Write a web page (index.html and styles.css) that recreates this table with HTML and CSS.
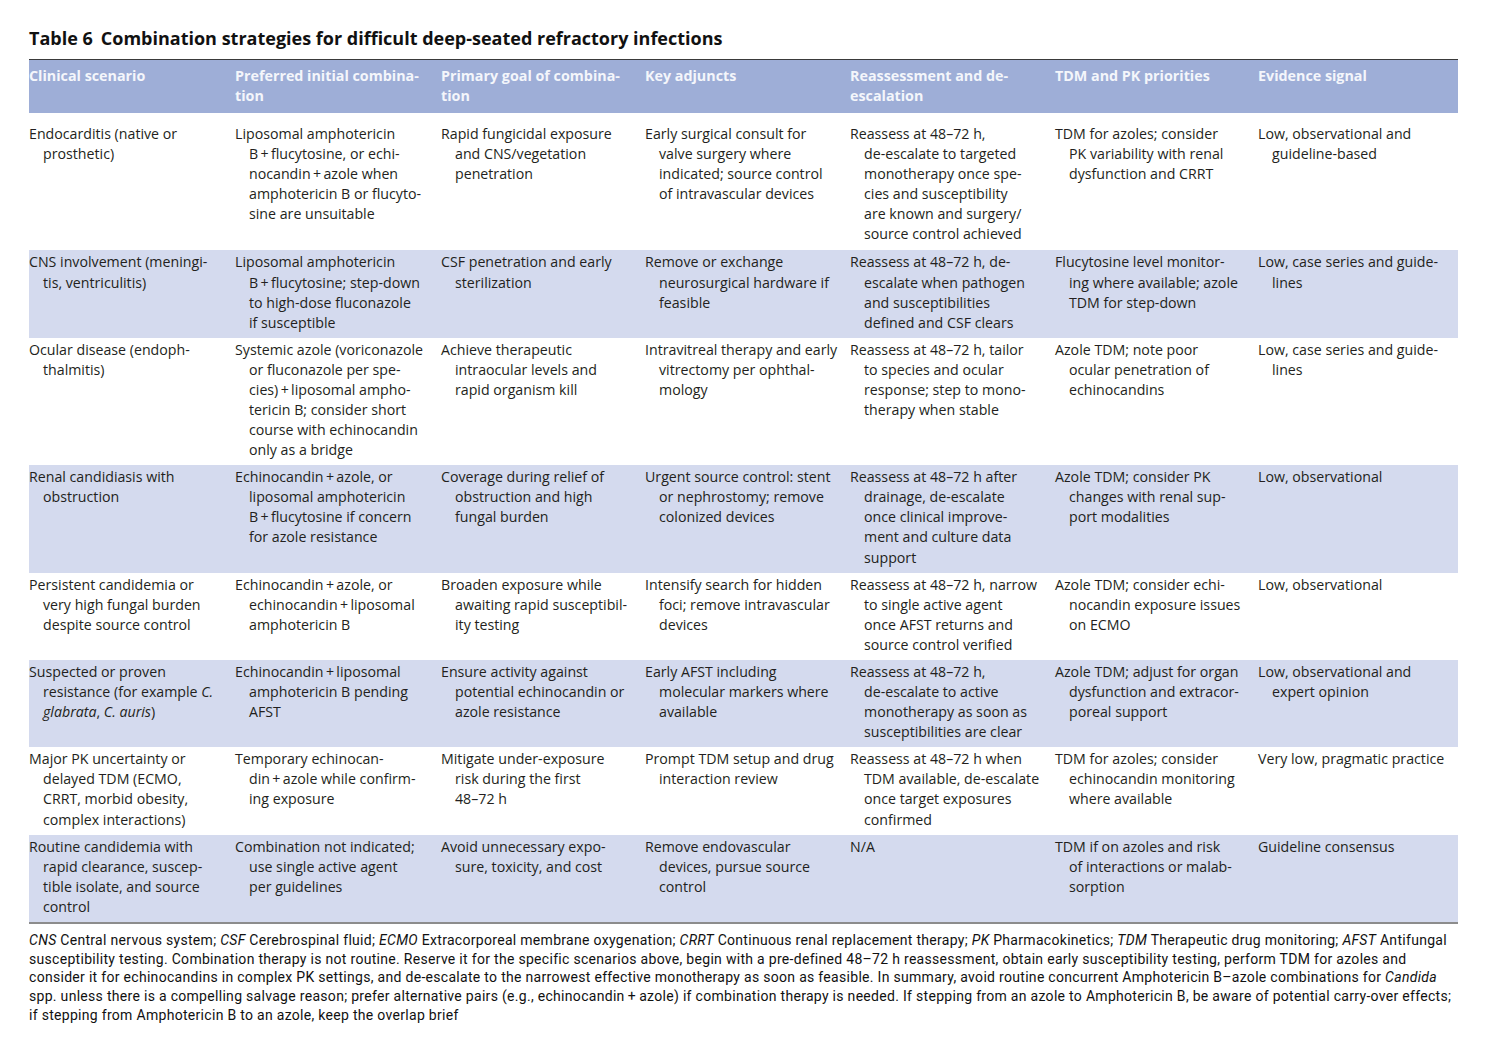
FILE: index.html
```html
<!DOCTYPE html>
<html lang="en">
<head>
<meta charset="utf-8">
<title>Table 6</title>
<link rel="stylesheet" href="styles.css">
</head>
<body>
<div class="page">
  <h1 class="title"><span class="num">Table 6</span>Combination strategies for difficult deep-seated refractory infections</h1>
  <table class="tbl">
    <colgroup>
      <col class="c1"><col class="c2"><col class="c3"><col class="c4"><col class="c5"><col class="c6"><col class="c7">
    </colgroup>
    <thead>
      <tr>
        <th>Clinical scenario</th>
        <th>Preferred initial combina-<br>tion</th>
        <th>Primary goal of combina-<br>tion</th>
        <th>Key adjuncts</th>
        <th>Reassessment and de-<br>escalation</th>
        <th>TDM and PK priorities</th>
        <th>Evidence signal</th>
      </tr>
    </thead>
    <tbody>
      <tr class="first">
        <td>Endocarditis (native or<br>prosthetic)</td>
        <td>Liposomal amphotericin<br>B&#8201;+&#8201;flucytosine, or echi-<br>nocandin&#8201;+&#8201;azole when<br>amphotericin B or flucyto-<br>sine are unsuitable</td>
        <td>Rapid fungicidal exposure<br>and CNS/vegetation<br>penetration</td>
        <td>Early surgical consult for<br>valve surgery where<br>indicated; source control<br>of intravascular devices</td>
        <td>Reassess at 48–72 h,<br>de-escalate to targeted<br>monotherapy once spe-<br>cies and susceptibility<br>are known and surgery/<br>source control achieved</td>
        <td>TDM for azoles; consider<br>PK variability with renal<br>dysfunction and CRRT</td>
        <td>Low, observational and<br>guideline-based</td>
      </tr>
      <tr class="alt">
        <td>CNS involvement (meningi-<br>tis, ventriculitis)</td>
        <td>Liposomal amphotericin<br>B&#8201;+&#8201;flucytosine; step-down<br>to high-dose fluconazole<br>if susceptible</td>
        <td>CSF penetration and early<br>sterilization</td>
        <td>Remove or exchange<br>neurosurgical hardware if<br>feasible</td>
        <td>Reassess at 48–72 h, de-<br>escalate when pathogen<br>and susceptibilities<br>defined and CSF clears</td>
        <td>Flucytosine level monitor-<br>ing where available; azole<br>TDM for step-down</td>
        <td>Low, case series and guide-<br>lines</td>
      </tr>
      <tr>
        <td>Ocular disease (endoph-<br>thalmitis)</td>
        <td>Systemic azole (voriconazole<br>or fluconazole per spe-<br>cies)&#8201;+&#8201;liposomal ampho-<br>tericin B; consider short<br>course with echinocandin<br>only as a bridge</td>
        <td>Achieve therapeutic<br>intraocular levels and<br>rapid organism kill</td>
        <td>Intravitreal therapy and early<br>vitrectomy per ophthal-<br>mology</td>
        <td>Reassess at 48–72 h, tailor<br>to species and ocular<br>response; step to mono-<br>therapy when stable</td>
        <td>Azole TDM; note poor<br>ocular penetration of<br>echinocandins</td>
        <td>Low, case series and guide-<br>lines</td>
      </tr>
      <tr class="alt">
        <td>Renal candidiasis with<br>obstruction</td>
        <td>Echinocandin&#8201;+&#8201;azole, or<br>liposomal amphotericin<br>B&#8201;+&#8201;flucytosine if concern<br>for azole resistance</td>
        <td>Coverage during relief of<br>obstruction and high<br>fungal burden</td>
        <td>Urgent source control: stent<br>or nephrostomy; remove<br>colonized devices</td>
        <td>Reassess at 48–72 h after<br>drainage, de-escalate<br>once clinical improve-<br>ment and culture data<br>support</td>
        <td>Azole TDM; consider PK<br>changes with renal sup-<br>port modalities</td>
        <td>Low, observational</td>
      </tr>
      <tr>
        <td>Persistent candidemia or<br>very high fungal burden<br>despite source control</td>
        <td>Echinocandin&#8201;+&#8201;azole, or<br>echinocandin&#8201;+&#8201;liposomal<br>amphotericin B</td>
        <td>Broaden exposure while<br>awaiting rapid susceptibil-<br>ity testing</td>
        <td>Intensify search for hidden<br>foci; remove intravascular<br>devices</td>
        <td>Reassess at 48–72 h, narrow<br>to single active agent<br>once AFST returns and<br>source control verified</td>
        <td>Azole TDM; consider echi-<br>nocandin exposure issues<br>on ECMO</td>
        <td>Low, observational</td>
      </tr>
      <tr class="alt">
        <td>Suspected or proven<br>resistance (for example <i>C.</i><br><i>glabrata</i>, <i>C. auris</i>)</td>
        <td>Echinocandin&#8201;+&#8201;liposomal<br>amphotericin B pending<br>AFST</td>
        <td>Ensure activity against<br>potential echinocandin or<br>azole resistance</td>
        <td>Early AFST including<br>molecular markers where<br>available</td>
        <td>Reassess at 48–72 h,<br>de-escalate to active<br>monotherapy as soon as<br>susceptibilities are clear</td>
        <td>Azole TDM; adjust for organ<br>dysfunction and extracor-<br>poreal support</td>
        <td>Low, observational and<br>expert opinion</td>
      </tr>
      <tr>
        <td>Major PK uncertainty or<br>delayed TDM (ECMO,<br>CRRT, morbid obesity,<br>complex interactions)</td>
        <td>Temporary echinocan-<br>din&#8201;+&#8201;azole while confirm-<br>ing exposure</td>
        <td>Mitigate under-exposure<br>risk during the first<br>48–72 h</td>
        <td>Prompt TDM setup and drug<br>interaction review</td>
        <td>Reassess at 48–72 h when<br>TDM available, de-escalate<br>once target exposures<br>confirmed</td>
        <td>TDM for azoles; consider<br>echinocandin monitoring<br>where available</td>
        <td>Very low, pragmatic practice</td>
      </tr>
      <tr class="alt">
        <td>Routine candidemia with<br>rapid clearance, suscep-<br>tible isolate, and source<br>control</td>
        <td>Combination not indicated;<br>use single active agent<br>per guidelines</td>
        <td>Avoid unnecessary expo-<br>sure, toxicity, and cost</td>
        <td>Remove endovascular<br>devices, pursue source<br>control</td>
        <td>N/A</td>
        <td>TDM if on azoles and risk<br>of interactions or malab-<br>sorption</td>
        <td>Guideline consensus</td>
      </tr>
    </tbody>
  </table>
  <p class="note"><i>CNS</i> Central nervous system; <i>CSF</i> Cerebrospinal fluid; <i>ECMO</i> Extracorporeal membrane oxygenation; <i>CRRT</i> Continuous renal replacement therapy; <i>PK</i> Pharmacokinetics; <i>TDM</i> Therapeutic drug monitoring; <i>AFST</i> Antifungal<br>susceptibility testing. Combination therapy is not routine. Reserve it for the specific scenarios above, begin with a pre-defined 48–72 h reassessment, obtain early susceptibility testing, perform TDM for azoles and<br>consider it for echinocandins in complex PK settings, and de-escalate to the narrowest effective monotherapy as soon as feasible. In summary, avoid routine concurrent Amphotericin B–azole combinations for <i>Candida</i><br>spp. unless there is a compelling salvage reason; prefer alternative pairs (e.g., echinocandin&#8201;+&#8201;azole) if combination therapy is needed. If stepping from an azole to Amphotericin B, be aware of potential carry-over effects;<br>if stepping from Amphotericin B to an azole, keep the overlap brief</p>
</div>
</body>
</html>
```

FILE: styles.css
```css
html, body {
  margin: 0;
  padding: 0;
  background: #ffffff;
}

.page {
  padding: 27px 0 0 29px;
  width: 1429px;
  font-family: "Open Sans", "Lato", sans-serif;
  color: #231f20;
}

.title {
  margin: 0 0 10px 0;
  font-size: 18px;
  line-height: 22px;
  font-weight: 700;
  color: #111;
  white-space: nowrap;
}

.title .num {
  margin-right: 8px;
}

.tbl {
  width: 1429px;
  table-layout: fixed;
  border-collapse: collapse;
  border-top: 1px solid #3a3a3a;
  border-bottom: 2px solid #8c8c8c;
}

.c1 { width: 206px; }
.c2 { width: 206px; }
.c3 { width: 204px; }
.c4 { width: 205px; }
.c5 { width: 205px; }
.c6 { width: 203px; }
.c7 { width: 200px; }

.tbl thead tr {
  background: #9eaed7;
}

.tbl th {
  text-align: left;
  vertical-align: top;
  font-size: 14.3px;
  line-height: 20px;
  font-weight: 700;
  color: #f4f6fb;
  padding: 6px 4px 7px 0;
  white-space: nowrap;
}

.tbl td {
  vertical-align: top;
  font-size: 14.2px;
  line-height: 20.08px;
  padding: 2px 4px 5px 14px;
  text-indent: -14px;
  white-space: nowrap;
}

.tbl tr.first td {
  padding-top: 11px;
  padding-bottom: 6px;
}

.tbl tr.alt {
  background: #d4daee;
}

.note {
  margin: 7px 0 0 0;
  font-family: "Roboto", "Liberation Sans", sans-serif;
  font-size: 14px;
  line-height: 18.75px;
  letter-spacing: 0.3px;
  color: #111;
  white-space: nowrap;
}
```
